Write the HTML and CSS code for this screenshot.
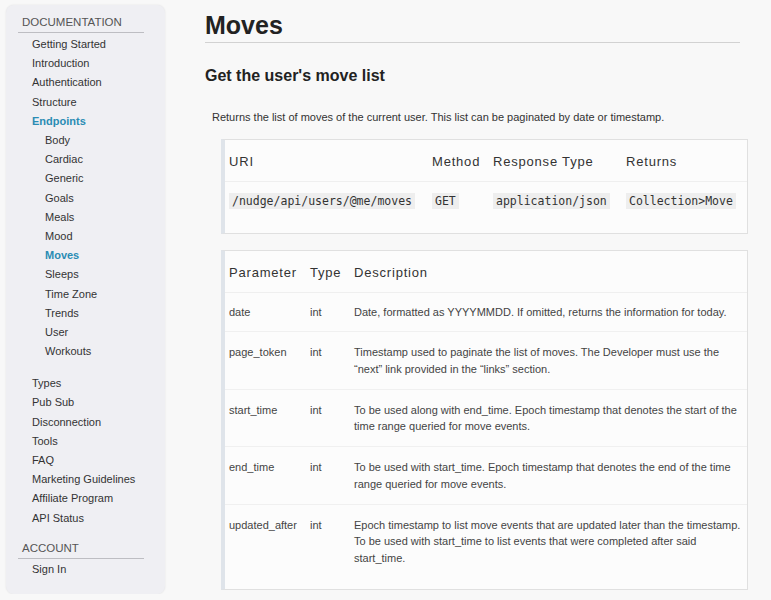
FILE: index.html
```html
<!DOCTYPE html>
<html>
<head>
<meta charset="utf-8">
<link rel="stylesheet" href="styles.css">
</head>
<body>
<div class="page">
  <nav class="sidebar">
    <div class="nav-head">DOCUMENTATION</div>
    <ul class="nav-list">
      <li>Getting Started</li>
      <li>Introduction</li>
      <li>Authentication</li>
      <li>Structure</li>
      <li class="active">Endpoints</li>
      <li class="sub">Body</li>
      <li class="sub">Cardiac</li>
      <li class="sub">Generic</li>
      <li class="sub">Goals</li>
      <li class="sub">Meals</li>
      <li class="sub">Mood</li>
      <li class="sub active">Moves</li>
      <li class="sub">Sleeps</li>
      <li class="sub">Time Zone</li>
      <li class="sub">Trends</li>
      <li class="sub">User</li>
      <li class="sub">Workouts</li>
    </ul>
    <ul class="nav-list second">
      <li>Types</li>
      <li>Pub Sub</li>
      <li>Disconnection</li>
      <li>Tools</li>
      <li>FAQ</li>
      <li>Marketing Guidelines</li>
      <li>Affiliate Program</li>
      <li>API Status</li>
    </ul>
    <div class="nav-head account">ACCOUNT</div>
    <ul class="nav-list account-list">
      <li>Sign In</li>
    </ul>
  </nav>
  <main class="content">
    <h1 class="title">Moves</h1>
    <h2 class="subtitle">Get the user's move list</h2>
    <p class="intro">Returns the list of moves of the current user. This list can be paginated by date or timestamp.</p>
    <div class="box box-uri">
      <table class="tbl">
        <colgroup><col class="c-uri"><col class="c-method"><col class="c-resp"><col></colgroup>
        <thead><tr><th>URI</th><th>Method</th><th>Response Type</th><th>Returns</th></tr></thead>
        <tbody><tr>
          <td><code>/nudge/api/users/@me/moves</code></td>
          <td><code>GET</code></td>
          <td><code>application/json</code></td>
          <td><code>Collection&gt;Move</code></td>
        </tr></tbody>
      </table>
    </div>
    <div class="box box-params">
      <table class="tbl">
        <colgroup><col class="c-param"><col class="c-type"><col></colgroup>
        <thead><tr><th>Parameter</th><th>Type</th><th>Description</th></tr></thead>
        <tbody>
          <tr><td>date</td><td>int</td><td>Date, formatted as YYYYMMDD. If omitted, returns the information for today.</td></tr>
          <tr class="multi"><td>page_token</td><td>int</td><td>Timestamp used to paginate the list of moves. The Developer must use the “next” link provided in the “links” section.</td></tr>
          <tr class="multi"><td>start_time</td><td>int</td><td>To be used along with end_time. Epoch timestamp that denotes the start of the time range queried for move events.</td></tr>
          <tr class="multi"><td>end_time</td><td>int</td><td>To be used with start_time. Epoch timestamp that denotes the end of the time range queried for move events.</td></tr>
          <tr class="multi"><td>updated_after</td><td>int</td><td>Epoch timestamp to list move events that are updated later than the timestamp. To be used with start_time to list events that were completed after said start_time.</td></tr>
        </tbody>
      </table>
    </div>
  </main>
</div>
</body>
</html>
```
FILE: styles.css
```css
html, body {
  margin: 0;
  padding: 0;
}
body {
  background: #f8f8f8;
  font-family: "Liberation Sans", Arial, sans-serif;
  color: #333;
}
.page {
  display: flex;
  align-items: flex-start;
  padding: 5px 0 0 6px;
}
.sidebar {
  width: 159px;
  box-sizing: border-box;
  background: #efeff3;
  border-radius: 8px;
  box-shadow: 0 0 2px rgba(0,0,0,0.10);
  padding: 9px 21px 14px 12px;
  flex: none;
}
.nav-head {
  font-size: 11.5px;
  line-height: 16px;
  color: #555;
  padding: 0 0 2px 4px;
  border-bottom: 1px solid #bdbdc2;
}
.nav-head.account {
  margin-top: 12px;
}
.nav-list {
  list-style: none;
  margin: 2px 0 0 0;
  padding: 0 0 0 14px;
  font-size: 11px;
  line-height: 19.2px;
  color: #333;
}
.nav-list.second {
  margin-top: 12.8px;
}
.nav-list.account-list {
  margin-top: 1.6px;
}
.nav-list .sub {
  padding-left: 13px;
}
.nav-list .active {
  color: #2a8cb4;
  font-weight: bold;
}
.content {
  margin-left: 40px;
  width: 543px;
  flex: none;
}
.title {
  font-size: 25px;
  line-height: 30px;
  font-weight: bold;
  color: #222;
  margin: 5px 8px 0 0;
  padding-bottom: 2px;
  border-bottom: 1px solid #d2d2d2;
}
.subtitle {
  font-size: 16px;
  line-height: 20px;
  font-weight: bold;
  color: #222;
  margin: 23px 0 0 0;
}
.intro {
  font-size: 11px;
  line-height: 16.5px;
  color: #333;
  margin: 23px 0 0 7px;
}
.box {
  margin: 13.5px 0 0 16px;
  background: #fcfcfc;
  border: 1px solid #e0e0e0;
  border-left: 4px solid #dfe4ea;
  padding-bottom: 13px;
}
.box-params {
  margin-top: 16px;
  padding-bottom: 11px;
}
.tbl {
  width: 100%;
  border-collapse: collapse;
  table-layout: fixed;
}
.c-uri { width: 203px; }
.c-method { width: 61px; }
.c-resp { width: 133px; }
.c-param { width: 81px; }
.c-type { width: 44px; }
.tbl th {
  text-align: left;
  font-weight: normal;
  font-size: 13px;
  letter-spacing: 0.8px;
  line-height: 16px;
  color: #333;
  padding: 14px 4px 11px;
  border-bottom: 1px solid #efefef;
}
.tbl td {
  vertical-align: top;
  font-size: 11px;
  line-height: 16.5px;
  color: #444;
  padding: 10.5px 4px 11px;
  border-bottom: 1px solid #f0f0f0;
}
.tbl tr.multi td {
  padding: 12px 4px 11.5px;
}
.tbl tbody tr:last-child td {
  border-bottom: none;
}
code {
  font-family: "DejaVu Sans Mono", "Liberation Mono", monospace;
  font-size: 11.5px;
  background: #eeeeee;
  padding: 1px 3px;
  color: #333;
}
```
